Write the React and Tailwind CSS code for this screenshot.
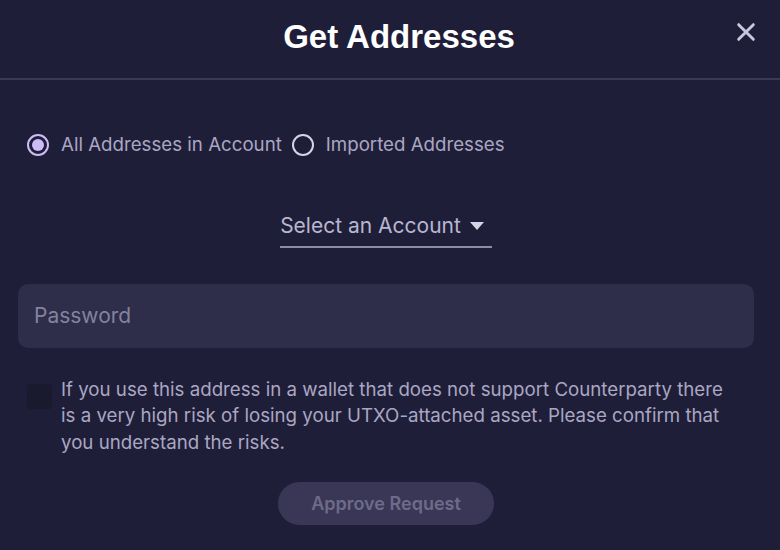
import React from 'react';

export default function App() {
    return (
        <div className="w-[780px] h-[550px] bg-[#1f1e39] text-[#aaa7c2] overflow-hidden" style={{ fontFamily: 'Inter, "Noto Sans", sans-serif' }}>
            {/* Header */}
            <div className="relative h-[80px] flex items-center justify-center border-b-2 border-[#3b3a52]">
                <h1 className="text-[33px] font-bold text-white ml-[18px] -mt-[4px]" style={{ fontFamily: '"Liberation Sans", Arial, sans-serif' }}>
                    Get Addresses
                </h1>
                <button className="absolute right-[23px] top-[21px] text-[#c9c6dd]">
                    <svg width="22" height="22" viewBox="0 0 24 24" fill="none" stroke="currentColor" strokeWidth="3.2" strokeLinecap="round">
                        <path d="M4 4 L20 20 M20 4 L4 20" />
                    </svg>
                </button>
            </div>

            {/* Radios */}
            <div className="flex items-center gap-[10px] px-[27px] pt-[51px] text-[18.7px]">
                <label className="flex items-center gap-[12px]">
                    <span className="w-[22px] h-[22px] rounded-full border-2 border-[#cdbcf6] flex items-center justify-center">
                        <span className="w-[12px] h-[12px] rounded-full bg-[#cdbcf6]" />
                    </span>
                    <span>All Addresses in Account</span>
                </label>
                <label className="flex items-center gap-[12px]">
                    <span className="w-[22px] h-[22px] rounded-full border-2 border-[#d6d3e6]" />
                    <span>Imported Addresses</span>
                </label>
            </div>

            {/* Account select */}
            <div className="flex justify-center pt-[51px]">
                <div className="flex items-center gap-[9px] border-b-2 border-[#8e8ba6] pb-[4px] pr-[8px] mr-[8px] text-[21px] text-[#b9b6cf]">
                    <span>Select an Account</span>
                    <svg width="14" height="8" viewBox="0 0 14 8">
                        <path d="M0 0 H14 L7 8 Z" fill="#d6d3e6" />
                    </svg>
                </div>
            </div>

            {/* Password */}
            <div className="px-[18px] pt-[36px] pr-[26px]">
                <div className="h-[64px] rounded-[10px] bg-[#2e2d4a] flex items-center px-[16px] text-[21px] text-[#85829f]">
                    Password
                </div>
            </div>

            {/* Warning checkbox */}
            <div className="flex gap-[9px] pl-[27px] pr-[42px] pt-[29px]">
                <span className="mt-[7px] w-[25px] h-[25px] shrink-0 rounded-[3px] bg-[#1a1a2f]" />
                <p className="text-[18.7px] leading-[26.5px]">
                    If you use this address in a wallet that does not support Counterparty there is a very high risk of losing your UTXO-attached asset. Please confirm that you understand the risks.
                </p>
            </div>

            {/* Approve */}
            <div className="flex justify-center pt-[26px]">
                <button className="w-[216px] h-[43px] mr-[8px] rounded-full bg-[#393755] text-[18px] font-semibold text-[#6e6b89]">
                    Approve Request
                </button>
            </div>
        </div>
    );
}
